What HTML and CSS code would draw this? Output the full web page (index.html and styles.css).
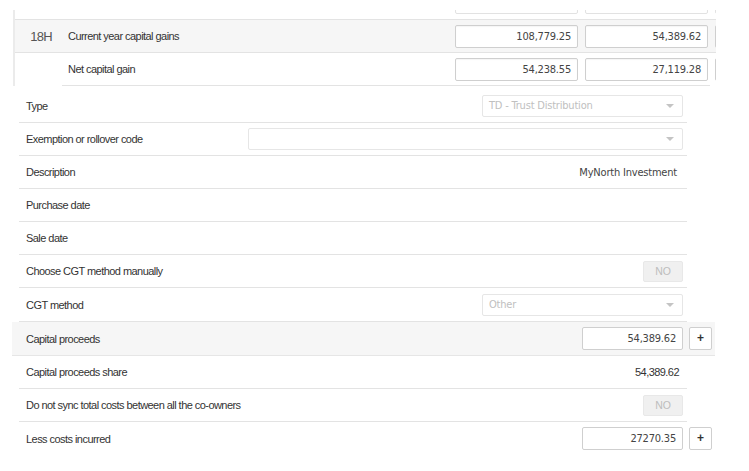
FILE: index.html
```html
<!DOCTYPE html>
<html lang="en">
<head>
  <meta charset="UTF-8">
  <title>Capital gains</title>
  <link rel="stylesheet" href="styles.css">
</head>
<body>
  <div class="gains">
    <div class="gains-row gains-row-cut">
      <div class="code"></div>
      <div class="gains-body">
        <div class="gains-label"></div>
        <div class="num"></div>
        <div class="num"></div>
        <div class="num"></div>
      </div>
    </div>
    <div class="gains-row gains-row-total">
      <div class="code">18H</div>
      <div class="gains-body">
        <div class="gains-label">Current year capital gains</div>
        <div class="num">108,779.25</div>
        <div class="num">54,389.62</div>
        <div class="num"></div>
      </div>
    </div>
    <div class="gains-row">
      <div class="code"></div>
      <div class="gains-body gains-body-line">
        <div class="gains-label">Net capital gain</div>
        <div class="num">54,238.55</div>
        <div class="num">27,119.28</div>
        <div class="num"></div>
      </div>
    </div>
  </div>

  <div class="form">
    <div class="row">
      <div class="field">
        <span class="label">Type</span>
        <div class="select select-type">TD - Trust Distribution<span class="caret"></span></div>
      </div>
      <div class="aside"></div>
    </div>
    <div class="row">
      <div class="field">
        <span class="label">Exemption or rollover code</span>
        <div class="select select-wide"><span class="caret"></span></div>
      </div>
      <div class="aside"></div>
    </div>
    <div class="row">
      <div class="field">
        <span class="label">Description</span>
        <span class="text-value">MyNorth Investment</span>
      </div>
      <div class="aside"></div>
    </div>
    <div class="row">
      <div class="field">
        <span class="label">Purchase date</span>
      </div>
      <div class="aside"></div>
    </div>
    <div class="row">
      <div class="field">
        <span class="label">Sale date</span>
      </div>
      <div class="aside"></div>
    </div>
    <div class="row">
      <div class="field">
        <span class="label">Choose CGT method manually</span>
        <div class="toggle">NO</div>
      </div>
      <div class="aside"></div>
    </div>
    <div class="row row-tall">
      <div class="field">
        <span class="label">CGT method</span>
        <div class="select select-type">Other<span class="caret"></span></div>
      </div>
      <div class="aside"></div>
    </div>
    <div class="row row-shaded">
      <div class="field">
        <span class="label">Capital proceeds</span>
        <div class="amount">54,389.62</div>
      </div>
      <div class="aside"><button class="plus">+</button></div>
    </div>
    <div class="row">
      <div class="field">
        <span class="label">Capital proceeds share</span>
        <span class="plain-value">54,389.62</span>
      </div>
      <div class="aside"></div>
    </div>
    <div class="row">
      <div class="field">
        <span class="label">Do not sync total costs between all the co-owners</span>
        <div class="toggle">NO</div>
      </div>
      <div class="aside"></div>
    </div>
    <div class="row row-last">
      <div class="field">
        <span class="label">Less costs incurred</span>
        <div class="amount">27270.35</div>
      </div>
      <div class="aside"><button class="plus">+</button></div>
    </div>
  </div>
</body>
</html>
```

FILE: styles.css
```css
body {
  margin: 0;
  font-family: "Liberation Sans", Arial, sans-serif;
  font-size: 11px;
  letter-spacing: -0.55px;
  color: #333;
  background-color: #fff;
}

/* top table */
.gains {
  margin-top: 10px;
  margin-left: 13px;
  width: 701px;
  border-left: 2px solid #ebebeb;
  overflow: hidden;
}
.gains-row {
  display: flex;
  height: 33px;
}
.gains-row-cut {
  height: 9px;
  align-items: flex-end;
  overflow: hidden;
}
.gains-row-cut .gains-body {
  align-items: flex-end;
}
.gains-row-cut .num {
  margin-bottom: 5px;
  border-color: #e2e2e2;
}
.gains-row-total {
  height: 34px;
  background-color: #f6f6f6;
  border-top: 1px solid #e3e3e3;
  border-bottom: 1px solid #e3e3e3;
  box-sizing: border-box;
}
.code {
  width: 37px;
  padding-right: 10px;
  flex-shrink: 0;
  text-align: right;
  font-size: 13px;
  letter-spacing: -0.7px;
  color: #555;
  align-self: center;
}
.gains-body {
  display: flex;
  align-items: center;
  flex-shrink: 0;
  width: 648px;
}
.gains-body-line {
  border-bottom: 1px solid #e3e3e3;
}
.gains-label {
  width: 387px;
  padding-left: 6px;
  flex-shrink: 0;
}
.num,
.amount,
.select,
.text-value {
  font-family: "DejaVu Sans Condensed", "DejaVu Sans", sans-serif;
  font-stretch: condensed;
  font-size: 11px;
  letter-spacing: -0.2px;
}
.num {
  width: 115px;
  height: 21px;
  flex-shrink: 0;
  margin-right: 7px;
  padding-right: 6px;
  border: 1px solid #cfcfcf;
  border-radius: 2px;
  background-color: #fff;
  box-shadow: inset 0 1px 1px rgba(0, 0, 0, 0.04);
  color: #444;
  line-height: 21px;
  text-align: right;
}

/* lower form */
.form {
  margin-top: 4px;
}
.row {
  display: flex;
  margin-left: 12px;
  width: 703px;
  height: 33px;
}
.row-tall {
  height: 34px;
}
.row-shaded {
  height: 34px;
  background-color: #f6f6f6;
  border-bottom: 1px solid #e6e6e6;
  box-sizing: border-box;
}
.row-shaded .field,
.row-last .field {
  border-bottom: none;
}
.field {
  flex: 1;
  display: flex;
  align-items: center;
  margin-left: 7px;
  padding: 0 4px 0 7px;
  border-bottom: 1px solid #e3e3e3;
}
.label {
  flex: 1;
}
.aside {
  width: 28px;
  display: flex;
  align-items: center;
}
.select {
  position: relative;
  height: 22px;
  box-sizing: border-box;
  border: 1px solid #e6e6e6;
  border-radius: 2px;
  padding-left: 6px;
  line-height: 20px;
  color: #c0c0c0;
  background-color: #fff;
}
.select-type {
  width: 201px;
}
.select-wide {
  width: 435px;
}
.caret {
  position: absolute;
  right: 8px;
  top: 8px;
  border-left: 4px solid transparent;
  border-right: 4px solid transparent;
  border-top: 4px solid #c4c4c4;
}
.text-value {
  color: #444;
  padding-right: 6px;
}
.plain-value {
  padding-right: 4px;
  color: #333;
}
.toggle {
  width: 40px;
  height: 21px;
  background-color: #f0f0f0;
  border: 1px solid #e8e8e8;
  box-sizing: border-box;
  border-radius: 2px;
  color: #bdbdbd;
  font-size: 10.5px;
  letter-spacing: 0;
  line-height: 19px;
  text-align: center;
}
.amount {
  width: 101px;
  height: 23px;
  box-sizing: border-box;
  border: 1px solid #cfcfcf;
  border-radius: 2px;
  padding-right: 6px;
  background-color: #fff;
  line-height: 21px;
  color: #444;
  text-align: right;
}
.plus {
  margin-left: 2px;
  width: 23px;
  height: 23px;
  padding: 0;
  border: 1px solid #cfcfcf;
  border-radius: 2px;
  background-color: #fff;
  font-family: "Liberation Sans", Arial, sans-serif;
  font-size: 12px;
  font-weight: bold;
  color: #333;
  line-height: 19px;
  cursor: pointer;
}
```
